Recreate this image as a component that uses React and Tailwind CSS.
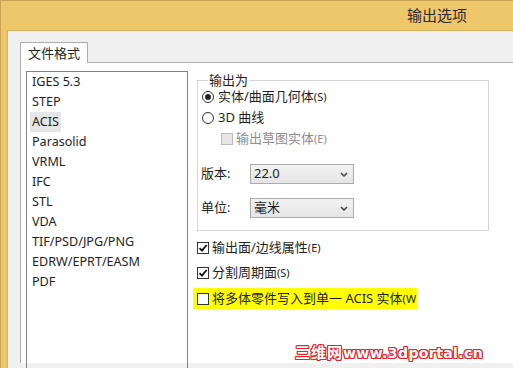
import React from 'react';

const formats = ['IGES 5.3', 'STEP', 'ACIS', 'Parasolid', 'VRML', 'IFC', 'STL', 'VDA', 'TIF/PSD/JPG/PNG', 'EDRW/EPRT/EASM', 'PDF'];

const Radio = ({ checked }) => (
  <span className="w-[12px] h-[12px] rounded-full border border-[#333] bg-white flex items-center justify-center shrink-0">
    {checked && <span className="w-[6px] h-[6px] rounded-full bg-[#222]"></span>}
  </span>
);

const Check = ({ checked, disabled }) => (
  <span
    className={
      disabled
        ? 'w-[12px] h-[12px] border border-[#bcbcbc] bg-[#e6e6e6] shrink-0'
        : 'w-[12px] h-[12px] border border-[#333] bg-white flex items-center justify-center shrink-0'
    }
  >
    {checked && (
      <svg width="10" height="10" viewBox="0 0 10 10">
        <path d="M1.5 5.2 L4 7.6 L8.6 2" fill="none" stroke="#111" strokeWidth="1.8" />
      </svg>
    )}
  </span>
);

const Select = ({ value }) => (
  <div className="w-[104px] h-[20px] border border-[#acacac] bg-gradient-to-b from-[#f2f2f2] to-[#e5e5e5] flex items-center justify-between pl-[3px] pr-[5px]">
    <span>{value}</span>
    <svg width="8" height="5" viewBox="0 0 8 5">
      <path d="M1 1 L4 4 L7 1" fill="none" stroke="#444" strokeWidth="1.5" />
    </svg>
  </div>
);

const Key = ({ children }) => <span className="text-[11px]">{children}</span>;

export default function App() {
  return (
    <div className="w-[513px] h-[368px] relative overflow-hidden bg-[#efc76b] border-t border-l border-[#c9a457] text-[13px] text-[#1e1e1e] font-['Noto_Sans','Noto_Sans_CJK_SC',sans-serif]">
      {/* title bar */}
      <div className="h-[29px] pl-[406px] flex items-center text-[15px] text-[#2b2b2b]">输出选项</div>

      {/* dialog body */}
      <div className="ml-[6px] h-[340px] bg-[#f0f0f0] border-t border-l border-[#d8b35e] pl-[12px] pt-[11px]">
        {/* tab */}
        <div className="flex items-end">
          <div className="w-[68px] h-[21px] bg-white border border-b-0 border-[#adadad] flex items-center pl-[7px] text-[13px] leading-none">文件格式</div>
          <div className="flex-1 border-b border-[#adadad]"></div>
        </div>

        {/* tab panel */}
        <div className="h-[300px] bg-white border-l border-[#adadad] pl-[5px] pt-[8px] flex">
          {/* format list */}
          <div className="w-[162px] h-[310px] border border-[#828282] flex flex-col items-start shrink-0 text-[12.6px]">
            {formats.map((f) => (
              <div
                key={f}
                className={
                  f === 'ACIS'
                    ? 'ml-[3px] px-[2px] h-[20px] leading-[20px] bg-[#e6e6e6]'
                    : 'ml-[3px] px-[2px] h-[20px] leading-[20px]'
                }
              >
                {f}
              </div>
            ))}
          </div>

          {/* options */}
          <div className="ml-[9px] flex flex-col">
            <fieldset className="w-[292px] h-[159px] border border-[#d5d5d5] px-[4px] pb-[11px] mt-[1px]">
              <legend className="ml-[6px] px-[1px] leading-[16px] text-[13px]">输出为</legend>
              <div className="flex items-center gap-[4px] h-[21px] -mt-[2px]">
                <Radio checked />
                <span>实体/曲面几何体<Key>(S)</Key></span>
              </div>
              <div className="flex items-center gap-[4px] h-[21px]">
                <Radio />
                <span>3D 曲线</span>
              </div>
              <div className="flex items-center gap-[3px] h-[21px] pl-[19px] text-[#8d8d8d]">
                <Check disabled />
                <span>输出草图实体<Key>(E)</Key></span>
              </div>
              <div className="flex items-center h-[20px] mt-[15px] -ml-[1px]">
                <span className="w-[49px]">版本:</span>
                <Select value="22.0" />
              </div>
              <div className="flex items-center h-[20px] mt-[14px] -ml-[1px]">
                <span className="w-[49px]">单位:</span>
                <Select value="毫米" />
              </div>
            </fieldset>

            <div className="flex items-center gap-[3px] h-[21px] mt-[6px]">
              <Check checked />
              <span>输出面/边线属性<Key>(E)</Key></span>
            </div>
            <div className="flex items-center gap-[3px] h-[21px] mt-[4px]">
              <Check checked />
              <span>分割周期面<Key>(S)</Key></span>
            </div>
            <div className="flex items-center gap-[3px] h-[21px] mt-[5px] -ml-[4px] pl-[4px] w-[224px] bg-[#ffff00]">
              <Check />
              <span>将多体零件写入到单一 ACIS 实体<Key>(W</Key></span>
            </div>
          </div>
        </div>
      </div>

      {/* watermark */}
      <div className="absolute left-[294px] top-[345px] text-[14px] font-bold leading-none text-white tracking-[0.4px] [text-shadow:1px_0_#e8202a,-1px_0_#e8202a,0_1px_#e8202a,0_-1px_#e8202a,1px_1px_#e8202a,-1px_-1px_#e8202a,1px_-1px_#e8202a,-1px_1px_#e8202a] font-['DejaVu_Sans','Noto_Sans_CJK_SC',sans-serif]">
        <span className="text-[15px] tracking-[1px]">三维网</span>www.3dportal.cn
      </div>
    </div>
  );
}
